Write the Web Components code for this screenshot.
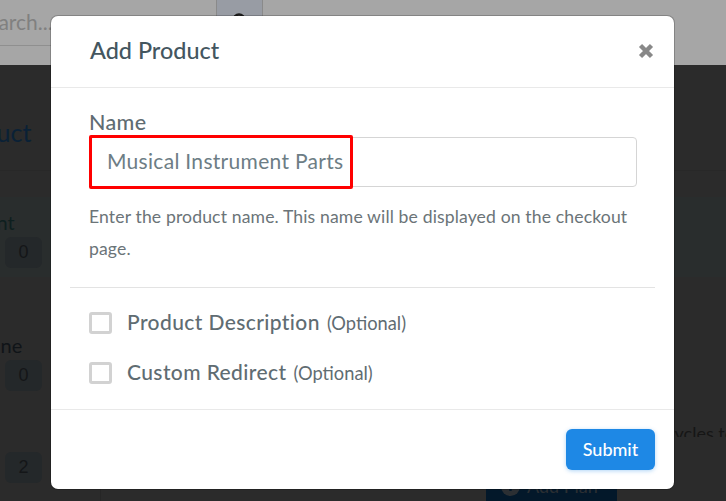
<!DOCTYPE html>
<html>
<head>
<meta charset="utf-8">
<style>
html, body { margin: 0; height: 100%; overflow: hidden; background: #2b2b2b; }
</style>
</head>
<body>
<page-behind></page-behind>
<product-modal heading="Add Product">
  <name-field label="Name" value="Musical Instrument Parts">Enter the product name. This name will be displayed on the checkout page.</name-field>
  <check-row slot="opts" optional="(Optional)">Product Description</check-row>
  <check-row slot="opts" optional="(Optional)">Custom Redirect</check-row>
</product-modal>

<script>
class PageBehind extends HTMLElement {
  constructor() {
    super();
    const shadow = this.attachShadow({ mode: "open" });
    shadow.innerHTML = `
    <style>
      :host { display: block; width: 726px; height: 501px; overflow: hidden; font-family: Lato, sans-serif; background: #2b2b2b; }
      .top { height: 65px; background: #a6a6a6; display: flex; align-items: flex-start; }
      .search { width: 216px; height: 45px; border-bottom: 1px solid #8f8f8f; overflow: hidden; }
      .search span { display: block; margin-left: -24px; font-size: 21px; line-height: 44px; color: #808080; }
      .go { width: 47px; height: 46px; box-sizing: border-box; background: #989ca4; border: solid #8a8a8a; border-width: 0 1px; display: flex; justify-content: center; padding-top: 12px; }
      .go svg { width: 18px; height: 18px; }
      .title { height: 106px; box-sizing: border-box; border-bottom: 1px solid #282828; overflow: hidden; }
      .title span { display: block; margin-left: -55px; padding-top: 52px; font-size: 25px; line-height: 30px; color: #0a2136; }
      .stats { height: 80px; margin-top: 26px; background: #292d2d; padding-top: 14px; box-sizing: border-box; }
      .cap { font-size: 20px; line-height: 22px; color: #0e1f1f; overflow: hidden; }
      .cap span { display: block; margin-left: -56px; }
      .badge { width: 37px; height: 31px; margin: 4px 0 0 5px; border-radius: 6px; background: #24282a; color: #141618; font: 18px/31px "Liberation Sans", sans-serif; text-align: center; }
      .low { display: flex; height: 224px; }
      .left { width: 101px; padding-top: 57px; box-sizing: border-box; border-right: 1px solid #262626; }
      .left .cap { color: #101418; }
      .left .cap span { margin-left: -36px; }
      .left .badge.last { margin-top: 61px; }
      .right { flex: 1; display: flex; flex-direction: column; align-items: flex-end; overflow: hidden; padding-top: 145px; box-sizing: border-box; }
      .cycles { font-size: 18px; line-height: 22px; color: #161616; white-space: nowrap; width: 60px; overflow: hidden; }
      .plan { align-self: flex-start; margin: 34px 0 0 385px; width: 131px; height: 30px; flex: none; background: #03182a; color: #2b2f33; font-size: 18px; line-height: 26px; padding-left: 15px; box-sizing: border-box; white-space: nowrap; display: flex; align-items: center; gap: 7px; }
      .plan svg { width: 19px; height: 19px; }
    </style>
    <div class="top">
      <div class="search"><span>Search...</span></div>
      <div class="go"><svg viewBox="0 0 18 18"><circle cx="8" cy="8" r="5.5" fill="none" stroke="#1c1c1c" stroke-width="2.4"/><path d="M12 12l5 5" stroke="#1c1c1c" stroke-width="2.4"/></svg></div>
    </div>
    <div class="title"><span>Product</span></div>
    <div class="stats">
      <div class="cap"><span>Amount</span></div>
      <div class="badge">0</div>
    </div>
    <div class="low">
      <div class="left">
        <div class="cap"><span>Online</span></div>
        <div class="badge">0</div>
        <div class="badge last">2</div>
      </div>
      <div class="right">
        <div class="cycles">cycles to</div>
        <div class="plan"><svg viewBox="0 0 19 19"><circle cx="9.5" cy="9.5" r="9.5" fill="#2b2f33"/><path d="M9.5 5v9M5 9.5h9" stroke="#03182a" stroke-width="2.4"/></svg>Add Plan</div>
      </div>
    </div>`;
  }
}

class ProductModal extends HTMLElement {
  constructor() {
    super();
    const shadow = this.attachShadow({ mode: "open" });
    shadow.innerHTML = `
    <style>
      :host { display: block; position: absolute; left: 51px; top: 16px; width: 623px; height: 473px; box-sizing: border-box; background: #fff; border-radius: 7px; box-shadow: 0 0 0 1px rgba(0,0,0,.2); font-family: Lato, sans-serif; }
      header { height: 72px; box-sizing: border-box; border-bottom: 1px solid #e9e9e9; display: flex; align-items: center; justify-content: space-between; padding: 0 20px 0 39px; }
      h2 { margin: -3px 0 0; font-size: 23.4px; font-weight: 500; color: #44565f; }
      header svg { width: 16px; height: 16px; margin-top: -2px; }
      .body { height: 322px; box-sizing: border-box; border-bottom: 1px solid #e9e9e9; padding: 22px 37px 0 38px; }
      .opts { margin: 0 -18px 0 -19px; padding: 24px 18px 0 19px; border-top: 1px solid #e3e3e3; display: flex; flex-direction: column; gap: 28px; }
      footer { display: flex; justify-content: flex-end; padding: 19px 19px 0 0; }
      button { width: 89px; height: 41px; border: 0; border-radius: 6px; background: #1e88e5; color: #fff; font: 500 18px Lato, sans-serif; padding: 0 0 2px; box-shadow: 0 1px 4px rgba(30,136,229,.35); }
    </style>
    <header>
      <h2>${this.getAttribute("heading")}</h2>
      <svg viewBox="0 0 16 16"><path d="M2.5 2.5l11 11M13.5 2.5l-11 11" stroke="#888" stroke-width="4.4"/></svg>
    </header>
    <div class="body">
      <slot></slot>
      <div class="opts"><slot name="opts"></slot></div>
    </div>
    <footer><button>Submit</button></footer>`;
  }
}

class NameField extends HTMLElement {
  constructor() {
    super();
    const shadow = this.attachShadow({ mode: "open" });
    shadow.innerHTML = `
    <style>
      :host { display: block; margin-bottom: 22px; color: #5f6c72; }
      label { display: block; font-size: 21.5px; font-weight: 500; line-height: 24px; letter-spacing: .35px; margin-bottom: 3px; }
      .box { position: relative; height: 50px; box-sizing: border-box; border: 1px solid #d5d5d5; border-radius: 4px; padding-left: 17px; font-size: 21px; line-height: 46px; color: #6d7d85; letter-spacing: .3px; }
      .box::after { content: ""; position: absolute; left: -1px; top: -3px; width: 264px; height: 54px; box-sizing: border-box; border: 3px solid #f00; border-radius: 2px; }
      p { margin: 14px 0 0; font-size: 17.6px; letter-spacing: .13px; line-height: 32px; color: #6b7478; }
    </style>
    <label>${this.getAttribute("label")}</label>
    <div class="box">${this.getAttribute("value")}</div>
    <p><slot></slot></p>`;
  }
}

class CheckRow extends HTMLElement {
  constructor() {
    super();
    const shadow = this.attachShadow({ mode: "open" });
    shadow.innerHTML = `
    <style>
      :host { display: flex; align-items: center; height: 22px; color: #5f6c72; white-space: nowrap; }
      i { width: 23px; height: 22px; box-sizing: border-box; border: 3px solid #d2d2d2; border-radius: 3px; margin-right: 15px; flex: none; }
      b { font-size: 21px; font-weight: 500; letter-spacing: .4px; margin-top: -3px; }
      small { font-size: 18.3px; margin-left: 7px; margin-top: 0; }
    </style>
    <i></i><b><slot></slot></b><small>${this.getAttribute("optional")}</small>`;
  }
}

customElements.define("page-behind", PageBehind);
customElements.define("product-modal", ProductModal);
customElements.define("name-field", NameField);
customElements.define("check-row", CheckRow);

</script>
</body>
</html>
